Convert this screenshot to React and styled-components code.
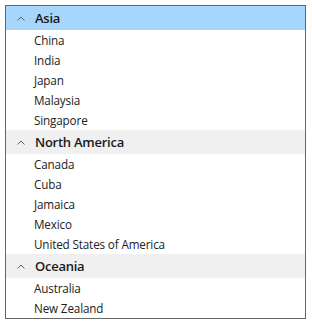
import React from 'react';
import styled, { createGlobalStyle } from 'styled-components';

const Global = createGlobalStyle`
  body {
    margin: 0;
    background: #fff;
    font-family: "Segoe UI", "Open Sans", "Noto Sans", sans-serif;
  }
`;

const Frame = styled.div`
  padding: 5px;
`;

const List = styled.div`
  width: 299px;
  border: 1px solid #666;
  background: #fff;
`;

const GroupHeader = styled.div`
  display: flex;
  align-items: center;
  height: 24px;
  padding-left: 11px;
  background: ${p => (p.selected ? '#a6d6fc' : '#f0f0f0')};
  color: #1a1a1a;
  font-size: 13px;
  font-weight: 600;
  letter-spacing: -0.25px;
`;

const Chevron = styled.svg`
  width: 8px;
  height: 5px;
  margin-right: 10px;
  color: #555;
`;

const Item = styled.div`
  height: 20px;
  line-height: 20px;
  padding-left: 28px;
  font-size: 11.7px;
  letter-spacing: -0.15px;
  color: #222;
`;

const groups = [
  { name: 'Asia', items: ['China', 'India', 'Japan', 'Malaysia', 'Singapore'], selected: true },
  { name: 'North America', items: ['Canada', 'Cuba', 'Jamaica', 'Mexico', 'United States of America'] },
  { name: 'Oceania', items: ['Australia', 'New Zealand'] },
];

export default function App() {
  return (
    <Frame>
      <Global />
      <List>
        {groups.map(g => (
          <div key={g.name}>
            <GroupHeader selected={g.selected}>
              <Chevron viewBox="0 0 8 5">
                <path d="M0.5 4.5 L4 1 L7.5 4.5" fill="none" stroke="currentColor" strokeWidth="0.9" />
              </Chevron>
              {g.name}
            </GroupHeader>
            {g.items.map(i => (
              <Item key={i}>{i}</Item>
            ))}
          </div>
        ))}
      </List>
    </Frame>
  );
}
